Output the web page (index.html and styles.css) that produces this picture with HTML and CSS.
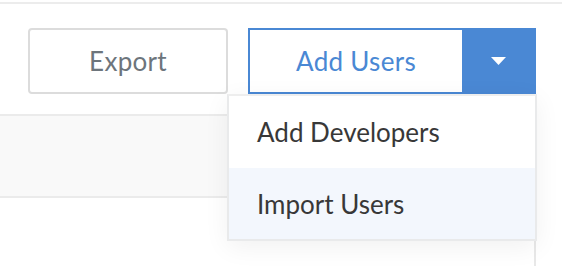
FILE: index.html
```html
<html>
<head>
  <link rel="stylesheet" href="styles.css">
</head>
<body>
  <div id="app">
    <div class="top-rule"></div>
    <div class="toolbar">
      <button class="btn btn-export">Export</button>
      <div class="split">
        <button class="btn btn-add">Add Users</button>
        <button class="btn btn-caret">
          <svg width="15" height="8" viewBox="0 0 15 8"><path d="M0 0 H15 L7.5 8 Z" fill="#fff"/></svg>
        </button>
        <ul class="menu">
          <li class="menu-item">Add Developers</li>
          <li class="menu-item active">Import Users</li>
        </ul>
      </div>
    </div>
    <div class="panel">
      <div class="panel-gap"></div>
      <div class="panel-band"></div>
      <div class="panel-body"></div>
    </div>
  </div>
</body>
</html>
```

FILE: styles.css
```css
*, *:before, *:after { box-sizing: border-box; }
html, body { height: 100%; }
body { margin: 0; padding: 0; font-family: Lato, "Open Sans", sans-serif; background-color: #fff; overflow: hidden; }
#app { display: flex; flex-direction: column; height: 100%; }

.top-rule { margin-top: 2px; height: 2px; background-color: #ececec; }

/* toolbar */
.toolbar { display: flex; justify-content: flex-end; gap: 20px; padding: 24px 26px 0 0; }
.btn {
  font-family: inherit;
  font-size: 26px;
  letter-spacing: 0.3px;
  height: 66px;
  margin: 0;
  padding: 0;
  background: #fff;
  cursor: pointer;
  outline: none;
}
.btn-export { width: 200px; border: 2px solid #dcdcdc; border-radius: 4px; color: #6d757c; }

.split { position: relative; display: flex; }
.btn-add { width: 214px; border: 2px solid #4a88d4; border-right: 0; color: #4a88d4; }
.btn-caret { width: 74px; border: 0; background-color: #4a88d4; display: flex; align-items: center; justify-content: center; }
.btn-caret svg { display: block; margin-right: 1px; }

/* dropdown */
.menu {
  position: absolute;
  top: 66px;
  right: -1px;
  width: 310px;
  margin: 0;
  padding: 0;
  list-style: none;
  background: #fff;
  border: 2px solid #e9eaeb;
  border-top-color: #eeeeee;
  box-shadow: 0 6px 24px rgba(0, 0, 0, 0.06);
  z-index: 2;
}
.menu-item { height: 72px; display: flex; align-items: center; padding-left: 28px; font-size: 26px; color: #383838; }
.menu-item.active { background-color: #f3f7fd; height: 71px; }

/* table behind */
.panel { flex: 1; width: 536px; border-right: 2px solid #e8e8e8; display: flex; flex-direction: column; }
.panel-gap { height: 20px; }
.panel-band { height: 84px; background-color: #f9f9f9; border-top: 2px solid #ebebeb; border-bottom: 2px solid #ebebeb; }
.panel-body { flex: 1; }
```
